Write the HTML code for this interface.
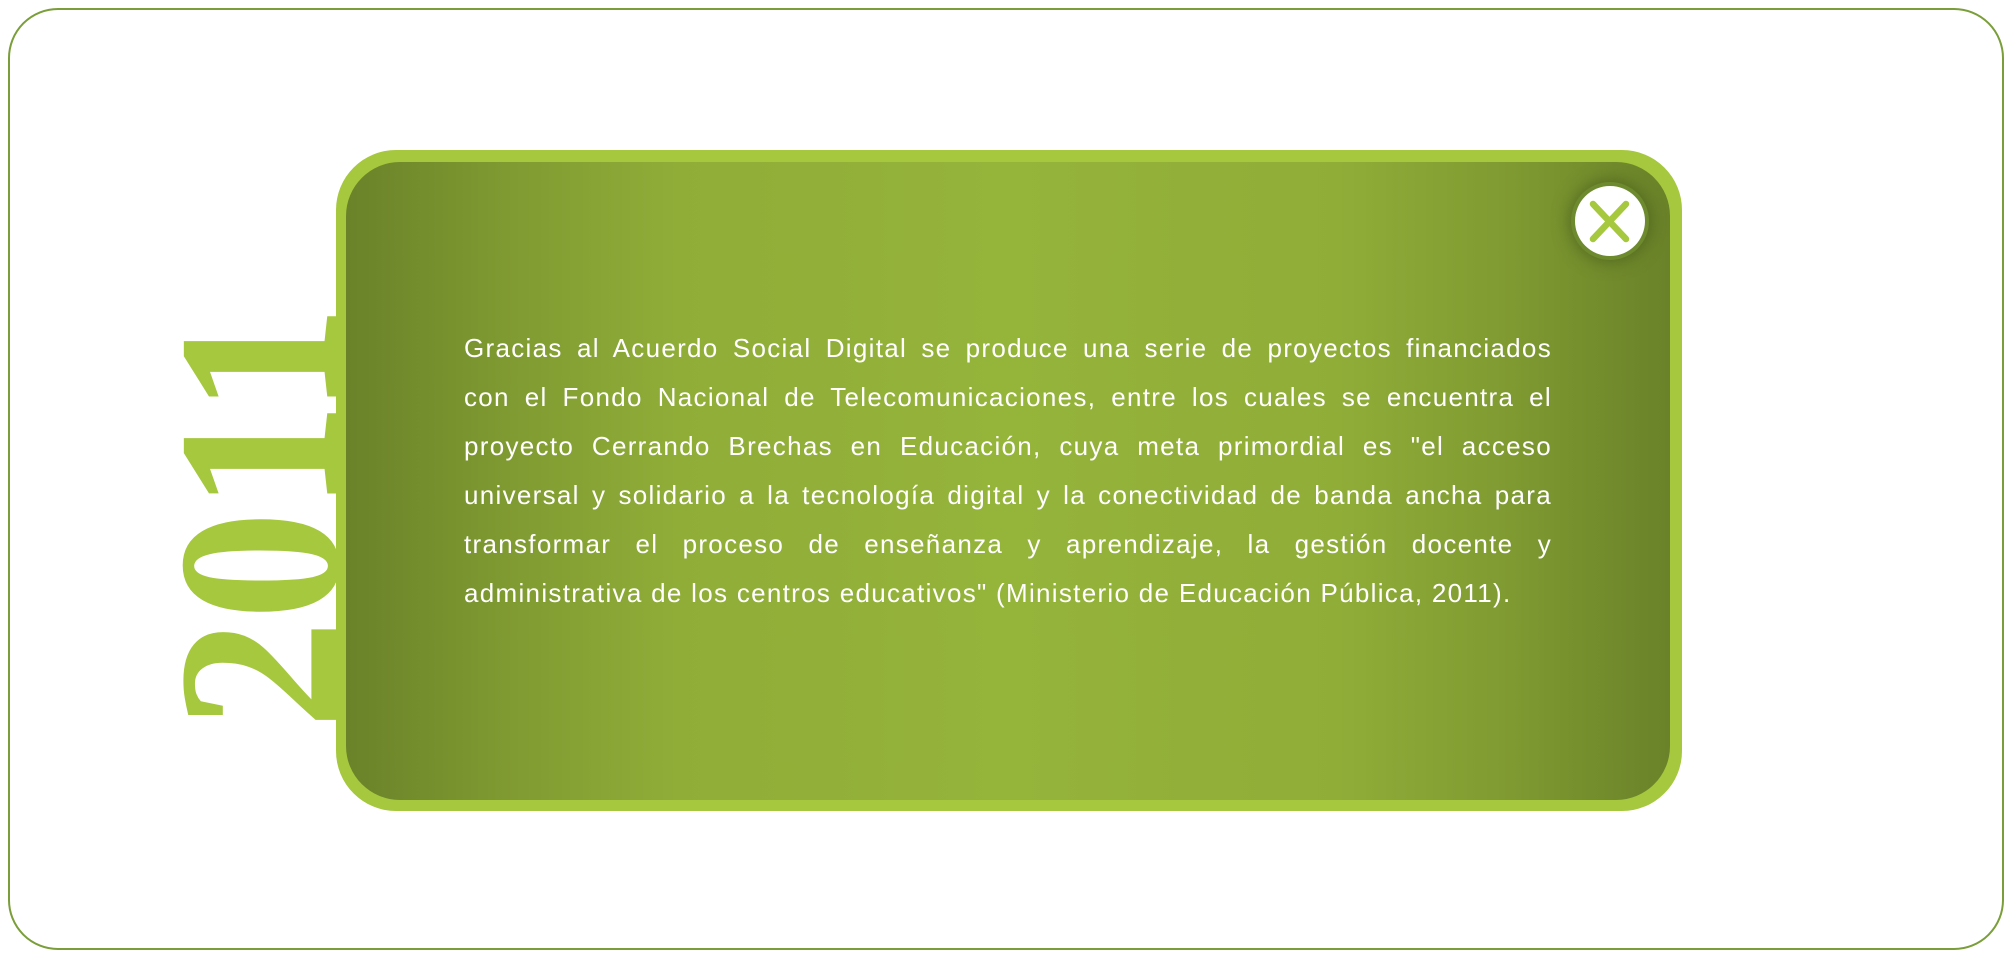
<!DOCTYPE html>
<html><head><meta charset="utf-8"><style>
html,body{margin:0;padding:0;background:#fff;width:2016px;height:962px;overflow:hidden;position:relative}
.frame{position:absolute;left:8px;top:8px;width:1996px;height:942px;border:2px solid #7a9e3a;border-radius:50px;box-sizing:border-box}
.outer{position:absolute;left:336px;top:150px;width:1346px;height:661px;background:#a5c83e;border-radius:60px}
.inner{position:absolute;left:346px;top:162px;width:1324px;height:638px;border-radius:54px;
background:linear-gradient(to right,#6a8229 0%,#7f9a31 12%,#90ad38 25%,#95b43a 50%,#90ad38 75%,#7f9a31 88%,#6a8229 100%)}
.txt{position:absolute;left:464px;top:324px;width:1088px;font-family:"Liberation Sans",sans-serif;font-size:26px;line-height:49px;color:#fff;letter-spacing:1.3px}
.txt div{text-align:justify;text-align-last:justify;white-space:nowrap}
.txt div.l{text-align-last:left}
.close{position:absolute;left:1571px;top:182px;width:78px;height:78px;border-radius:50%;background:#6d8a2e;box-shadow:0 0 18px rgba(50,70,20,.6)}
.close .w{position:absolute;left:4px;top:4px;width:70px;height:70px;border-radius:50%;background:#fff}
</style></head><body>
<div class="frame"></div>
<div class="outer"></div>
<div class="inner"></div>
<svg style="position:absolute;left:0;top:0" width="2016" height="962">
<text x="0" y="0" transform="translate(337,729) rotate(-90)" font-family="Liberation Serif" font-weight="bold" font-size="232" fill="#a5c83e" textLength="424" lengthAdjust="spacingAndGlyphs">2011</text>
</svg>
<div class="close"><div class="w"></div>
<svg style="position:absolute;left:0;top:0" width="78" height="78"><path d="M22 22 L55 57 M55 22 L22 57" stroke="#a5c83e" stroke-width="6.5" stroke-linecap="round"/></svg></div>
<div class="txt">
<div>Gracias al Acuerdo Social Digital se produce una serie de proyectos financiados</div>
<div>con el Fondo Nacional de Telecomunicaciones, entre los cuales se encuentra el</div>
<div>proyecto Cerrando Brechas en Educación, cuya meta primordial es "el acceso</div>
<div>universal y solidario a la tecnología digital y la conectividad de banda ancha para</div>
<div>transformar el proceso de enseñanza y aprendizaje, la gestión docente y</div>
<div class="l">administrativa de los centros educativos" (Ministerio de Educación Pública, 2011).</div>
</div>
</body></html>
